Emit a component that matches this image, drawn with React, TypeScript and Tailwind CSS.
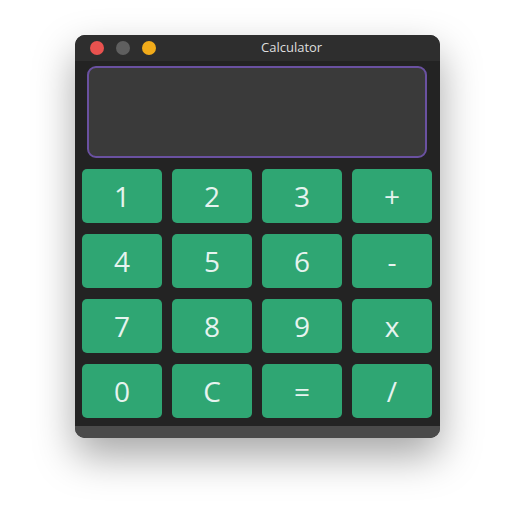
import React from 'react';

const keys = ['1', '2', '3', '+', '4', '5', '6', '-', '7', '8', '9', 'x', '0', 'C', '=', '/'];

export default function App() {
  return (
    <div className="w-[515px] h-[524px] bg-white pt-[35px] pl-[75px]" style={{ fontFamily: '"Open Sans", "Noto Sans", sans-serif' }}>
      <div className="w-[365px] rounded-[10px] overflow-hidden bg-[#232323] shadow-[0_18px_40px_rgba(0,0,0,0.35)]">
        <div className="h-[26px] bg-[#2e2e2e] flex items-center relative">
          <div className="flex gap-[12px] pl-[15px]">
            <span className="w-[14px] h-[14px] rounded-full bg-[#e9524f]" />
            <span className="w-[14px] h-[14px] rounded-full bg-[#5f5f5f]" />
            <span className="w-[14px] h-[14px] rounded-full bg-[#f1ab1a]" />
          </div>
          <span className="absolute left-[186px] top-[3px] text-[13px] text-[#dedede]">Calculator</span>
        </div>
        <div className="pt-[5px] pl-[12px] pr-[13px]">
          <div className="h-[92px] rounded-[9px] border-2 border-[#6a51a1] bg-[#3a3a3a]" />
        </div>
        <div className="grid grid-cols-4 gap-x-[10px] gap-y-[11px] pt-[11px] pl-[7px] pr-[8px] pb-[8px]">
          {keys.map(k => (
            <button key={k} className="h-[54px] rounded-[5px] bg-[#2fa673] text-[28px] text-[#e6f3ef] flex items-center justify-center leading-none">
              {k}
            </button>
          ))}
        </div>
        <div className="h-[12px] bg-[#4a4a4a]" />
      </div>
    </div>
  );
}
